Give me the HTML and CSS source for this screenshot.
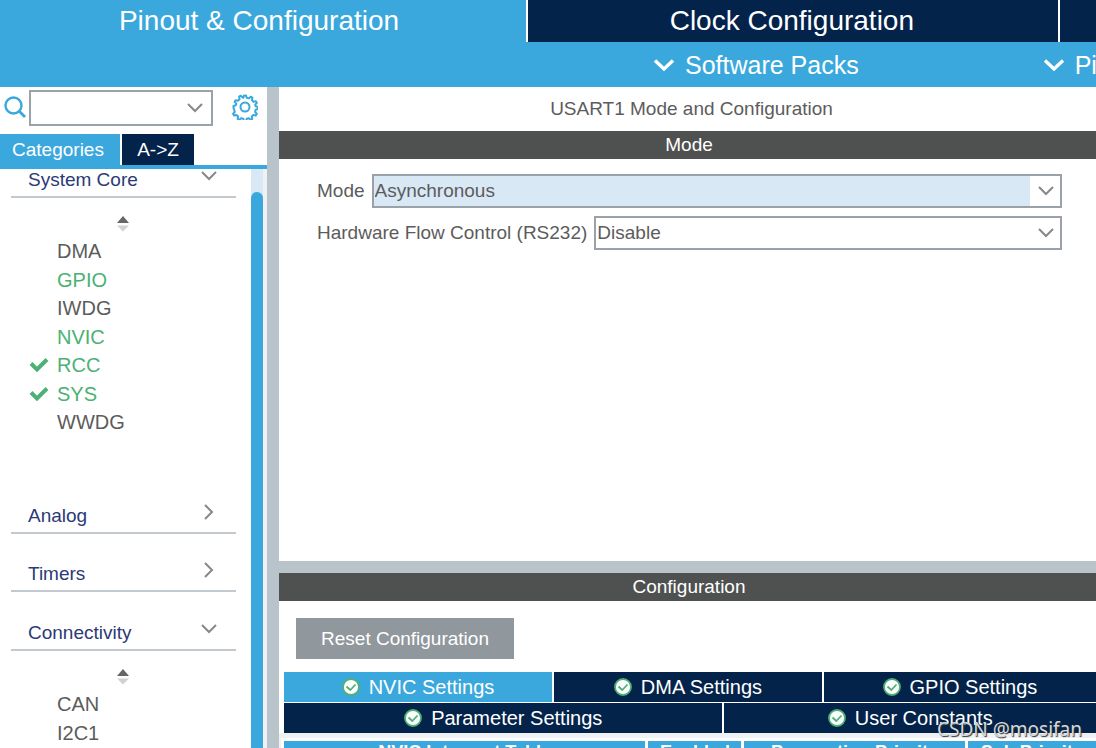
FILE: index.html
```html
<!DOCTYPE html>
<html lang="en">
<head>
<meta charset="utf-8">
<title>Pinout &amp; Configuration</title>
<link rel="stylesheet" href="styles.css">
</head>
<body>
<svg class="sprite" aria-hidden="true">
  <symbol id="chev-down" viewBox="0 0 16 10"><path d="M1 1l7 7 7-7" fill="none" stroke="currentColor" stroke-width="2"/></symbol>
  <symbol id="chev-right" viewBox="0 0 10 16"><path d="M1 1l7 7-7 7" fill="none" stroke="currentColor" stroke-width="2"/></symbol>
  <symbol id="chev-bold" viewBox="0 0 22 14"><path d="M2 2.500l9 8.500 9-8.500" fill="none" stroke="currentColor" stroke-width="3.400"/></symbol>
  <symbol id="sort" viewBox="0 0 14 18"><path d="M1 8l6-7 6 7z" fill="#666"/><path d="M1 10.500h12l-6 6z" fill="#d2d2d2"/></symbol>
  <symbol id="tick" viewBox="0 0 20 16"><path d="M2 6.500l6 6L18 2.500" fill="none" stroke="#4cb174" stroke-width="4"/></symbol>
  <symbol id="ok" viewBox="0 0 18 18"><circle cx="9" cy="9" r="8" fill="#fff" stroke="#4cb174" stroke-width="1.800"/><path d="M4.500 8.500l3.800 3.500 5.200-5.500" fill="none" stroke="#4cb174" stroke-width="1.800"/></symbol>
</svg>
<div class="app">
  <header class="header">
    <nav class="top-tabs">
      <button class="top-tab active">Pinout &amp; Configuration</button>
      <button class="top-tab">Clock Configuration</button>
      <button class="top-tab" aria-label="Project Manager"></button>
    </nav>
    <div class="toolbar">
      <button class="tool"><svg class="tool-icon"><use href="#chev-bold"/></svg>Software Packs</button>
      <button class="tool"><svg class="tool-icon"><use href="#chev-bold"/></svg>Pinout</button>
    </div>
  </header>
  <div class="body">
    <aside class="sidebar">
      <div class="search">
        <svg class="lens" viewBox="0 0 22 22"><circle cx="9.500" cy="9.500" r="8" fill="none" stroke="currentColor" stroke-width="2.400"/><path d="M15 15l6 6" stroke="currentColor" stroke-width="2.800"/></svg>
        <div class="combo search-combo">
          <input class="field" type="text" aria-label="Search">
          <svg class="chev"><use href="#chev-down"/></svg>
        </div>
        <button class="gear" aria-label="Settings">
          <svg viewBox="0 0 26 26" width="26" height="26"><g fill="none" stroke="currentColor" stroke-width="2"><circle cx="13" cy="13" r="4.500"/><path stroke-linejoin="round" d="M11.300 3.800L12 1.500h2l.7 2.300 2.300.6 1.700-1.700 1.700 1-.5 2.400 1.600 1.600 2.400-.5 1 1.700-1.700 1.700.5 1.700 2.300.7v2l-2.300.7-.6 2.300 1.700 1.700-1 1.700-2.400-.5-1.600 1.600.5 2.400-1.700 1-1.700-1.700-2.200.6-.7 2.200h-2l-.7-2.200-2.300-.6-1.700 1.700-1.700-1 .5-2.400-1.600-1.600-2.400.5-1-1.700 1.700-1.700-.6-2.300L1.500 14v-2l2.300-.7.5-1.700-1.700-1.700 1-1.700 2.400.5 1.600-1.600-.5-2.400 1.700-1 1.700 1.700z"/></g></svg>
        </button>
      </div>
      <div class="side-tabs">
        <button class="side-tab active">Categories</button>
        <button class="side-tab">A-&gt;Z</button>
      </div>
      <div class="tree">
        <div class="tree-list">
          <section class="group">
            <button class="group-head first">System Core<svg class="chev"><use href="#chev-down"/></svg></button>
            <div class="group-body">
              <svg class="sort"><use href="#sort"/></svg>
              <ul class="items">
                <li><a href="#">DMA</a></li>
                <li class="on"><a href="#">GPIO</a></li>
                <li><a href="#">IWDG</a></li>
                <li class="on"><a href="#">NVIC</a></li>
                <li class="on"><svg class="tick"><use href="#tick"/></svg><a href="#">RCC</a></li>
                <li class="on"><svg class="tick"><use href="#tick"/></svg><a href="#">SYS</a></li>
                <li><a href="#">WWDG</a></li>
              </ul>
            </div>
          </section>
          <section class="group"><button class="group-head">Analog<svg class="chev-r"><use href="#chev-right"/></svg></button></section>
          <section class="group"><button class="group-head">Timers<svg class="chev-r"><use href="#chev-right"/></svg></button></section>
          <section class="group">
            <button class="group-head">Connectivity<svg class="chev"><use href="#chev-down"/></svg></button>
            <div class="group-body">
              <svg class="sort"><use href="#sort"/></svg>
              <ul class="items">
                <li><a href="#">CAN</a></li>
                <li><a href="#">I2C1</a></li>
              </ul>
            </div>
          </section>
        </div>
        <div class="scrollbar"><div class="thumb"></div></div>
      </div>
    </aside>
    <main class="main">
      <section class="mode-panel">
        <h1 class="title">USART1 Mode and Configuration</h1>
        <h2 class="bar">Mode</h2>
        <form class="form">
          <div class="form-row">
            <label for="mode">Mode</label>
            <div class="combo">
              <select class="field selected" id="mode"><option>Asynchronous</option></select>
              <svg class="chev"><use href="#chev-down"/></svg>
            </div>
          </div>
          <div class="form-row">
            <label for="flow">Hardware Flow Control (RS232)</label>
            <div class="combo">
              <select class="field" id="flow"><option>Disable</option></select>
              <svg class="chev"><use href="#chev-down"/></svg>
            </div>
          </div>
        </form>
      </section>
      <section class="config-panel">
        <h2 class="bar">Configuration</h2>
        <button class="reset">Reset Configuration</button>
        <div class="tabs">
          <div class="tab-row">
            <button class="tab third active"><svg class="ok"><use href="#ok"/></svg>NVIC Settings</button>
            <button class="tab third"><svg class="ok"><use href="#ok"/></svg>DMA Settings</button>
            <button class="tab"><svg class="ok"><use href="#ok"/></svg>GPIO Settings</button>
          </div>
          <div class="tab-row">
            <button class="tab wide"><svg class="ok"><use href="#ok"/></svg>Parameter Settings</button>
            <button class="tab"><svg class="ok"><use href="#ok"/></svg>User Constants</button>
          </div>
        </div>
        <div class="table-wrap">
          <table class="table">
            <colgroup><col class="c-name"><col class="c-enabled"><col class="c-preempt"><col class="c-sub"></colgroup>
            <thead><tr><th>NVIC Interrupt Table</th><th>Enabled</th><th>Preemption Priority</th><th>Sub Priority</th></tr></thead>
          </table>
        </div>
      </section>
    </main>
  </div>
  <div class="watermark">CSDN @mosifan</div>
</div>
</body>
</html>
```
FILE: styles.css
```css
* { box-sizing: border-box; }
body {
  margin: 0;
  font: 19px/28px "Liberation Sans", Arial, sans-serif;
  color: #5c5c5c;
  background: #fff;
}
button, input, select {
  font: inherit;
  color: inherit;
  border: 0;
  border-radius: 0;
  background: none;
  padding: 0;
  margin: 0;
}
svg { flex: none; }
.sprite { position: absolute; width: 0; height: 0; }
.app {
  position: relative;
  display: flex;
  flex-direction: column;
  height: 100vh;
  overflow: hidden;
}

/* Header */
.header { flex: none; background: #3aa8dc; color: #fff; overflow: hidden; }
.top-tabs { display: flex; height: 42px; }
.top-tab {
  flex: 0 0 48.5%;
  padding: 0 2px 1px 0;
  font-size: 28px;
  background: #03234b;
  border-left: 2px solid #fff;
}
.top-tab.active { flex-basis: 48%; padding-right: 8px; background: none; border-left: 0; }
.toolbar {
  display: flex;
  height: 45px;
  gap: 184px;
  padding-left: 653px;
}
.tool {
  display: flex;
  flex: none;
  align-items: center;
  gap: 10px;
  font-size: 25px;
  white-space: nowrap;
}
.tool-icon { width: 22px; height: 14px; }

.body { display: flex; flex: 1; min-height: 0; }

/* Sidebar */
.sidebar {
  display: flex;
  flex: none;
  flex-direction: column;
  width: 279px;
  border-right: 12px solid #b9c3ca;
}
.search {
  display: flex;
  align-items: center;
  height: 47px;
  padding: 0 9px 6px 4px;
  color: #3aa8dc;
}
.lens { width: 22px; height: 22px; margin: 0 3px 2px 0; }
.gear { width: 26px; height: 26px; margin: 0 0 2px auto; line-height: 0; }
.combo { display: grid; flex: 1; color: #5c5c5c; }
.combo > * { grid-area: 1 / 1; }
.combo .chev { align-self: center; justify-self: end; margin-right: 8px; pointer-events: none; }
.chev { width: 16px; height: 10px; color: #888; }
.chev-r { width: 10px; height: 16px; color: #888; margin-right: 3px; }
.field {
  appearance: none;
  width: 100%;
  height: 34px;
  padding: 0 32px 0 1px;
  border: 2px solid #9aa1a8;
  background: #fff;
}
.search-combo { flex: 0 0 184px; }
.search-combo .field { height: 36px; }
.search-combo .chev { margin-right: 10px; }
.side-tabs {
  display: flex;
  height: 35px;
  gap: 2px;
  border-bottom: 4px solid #3aa8dc;
  color: #fff;
}
.side-tab { width: 72px; background: #03234b; }
.side-tab.active { width: 120px; background: #3aa8dc; padding-right: 4px; }
.tree { display: flex; flex: 1; min-height: 0; }
.tree-list { flex: 1; padding: 0 15px 0 11px; overflow: hidden; }
.scrollbar {
  display: flex;
  width: 16px;
  padding-top: 23px;
  background: #d9e8f5;
  border-right: 4px solid #f0f1f2;
}
.thumb { flex: 1; border-radius: 6px 6px 0 0; background: #3aa8dc; }
.group-head {
  display: flex;
  align-items: flex-end;
  justify-content: space-between;
  width: 100%;
  height: 58px;
  padding: 0 19px 2px 17px;
  border-bottom: 2px solid #c2cad0;
  color: #2c3a76;
}
.group:last-child .group-head { height: 59px; }
.group-head.first { height: 29px; }
.group-head .chev-r { margin-bottom: 10px; }
.group-head .chev { margin-bottom: 13px; }
.group-body { padding: 17px 0 40px; }
.sort { display: block; width: 14px; height: 18px; margin: 0 105px 4px; }
.items { list-style: none; margin: 0; padding: 0; }
.items li { display: flex; align-items: center; height: 28px; padding-left: 46px; font-size: 20px; }
.items li:nth-child(even) { height: 29px; }
.items a { color: inherit; text-decoration: none; }
.items .on { color: #4cb174; }
.tick { width: 20px; height: 16px; margin: 0 8px 0 -28px; }

/* Main */
.main { display: flex; flex: 1; flex-direction: column; min-width: 0; }
.mode-panel { flex: 1; border-bottom: 12px solid #b9c3ca; }
.title, .bar { margin: 0; font-size: 19px; font-weight: 400; text-align: center; }
.title { padding-left: 8px; line-height: 44px; }
.bar { background: #4f5150; color: #fff; padding-left: 3px; }
.form { display: grid; gap: 8px; padding: 15px 34px 0 38px; }
.form-row { display: flex; align-items: center; gap: 7px; }
.field.selected { background: linear-gradient(to left, #fff 30px, #d9e8f5 30px); }
.config-panel { flex: none; height: 175px; overflow: hidden; }
.reset {
  display: block;
  width: 218px;
  height: 41px;
  margin: 17px 0 13px 17px;
  background: #90979d;
  color: #fff;
}
.tabs { margin-left: 5px; background: #fff; }
.tab-row { display: flex; gap: 2px; }
.tab-row + .tab-row { margin-top: 1px; }
.tab {
  display: flex;
  flex: 1;
  align-items: center;
  justify-content: center;
  gap: 9px;
  height: 30px;
  font-size: 20px;
  background: #03234b;
  color: #fff;
}
.tab.active { background: #3aa8dc; }
.tab.third { flex: 0 0 33%; }
.tab.wide { flex: 0 0 54%; }
.ok { width: 18px; height: 18px; }
.table-wrap { padding: 5px 0 0 2px; background: #f0f1f2; }
.table { width: calc(100% + 3px); table-layout: fixed; border-spacing: 3px; background: #fff; font-size: 18px; line-height: 22px; }
.table th { padding: 0; background: #3aa8dc; color: #fff; white-space: nowrap; }
.c-name { width: 45%; }
.c-enabled { width: 11.6%; }
.c-preempt { width: 27.4%; }

.watermark {
  position: absolute;
  right: 14px;
  bottom: 5px;
  font: 19px/28px "Noto Sans", sans-serif;
  color: #d4d8dc;
  text-shadow: 1px 1px 1px #333;
}
```
